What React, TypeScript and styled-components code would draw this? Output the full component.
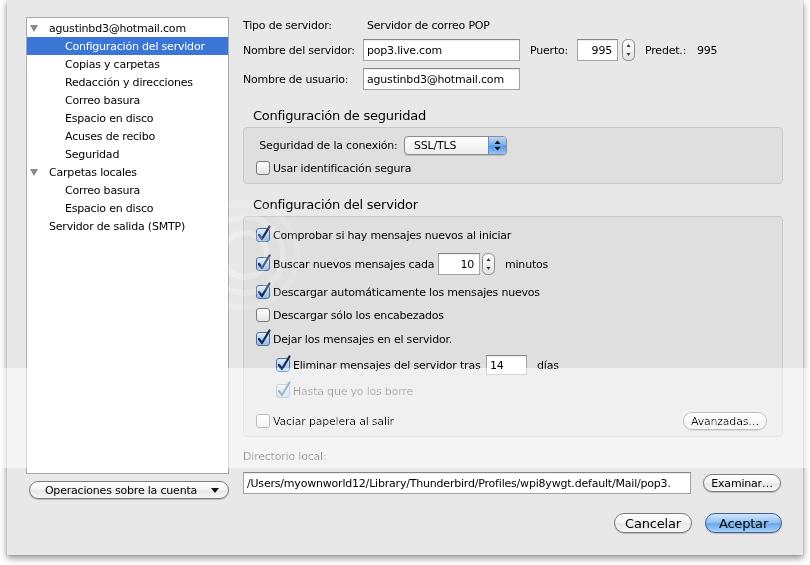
import React from "react";
import styled, { createGlobalStyle } from "styled-components";

const GlobalStyle = createGlobalStyle`
  html, body { margin: 0; padding: 0; background: #ffffff; }
  body {
    font-family: "DejaVu Sans", "Liberation Sans", sans-serif;
    font-size: 11px;
    letter-spacing: -0.2px;
    color: #000;
  }
`;

const Page = styled.div`
  position: relative;
  width: 810px;
  height: 565px;
  overflow: hidden;
  padding: 0 7px;
  box-sizing: border-box;
  background: #fff;
  isolation: isolate;
`;

const Window = styled.div`
  width: 796px;
  height: 555px;
  box-sizing: border-box;
  background: #e8e8e8;
  box-shadow: 0 3px 7px rgba(0, 0, 0, 0.45), 0 0 0 1px rgba(0, 0, 0, 0.06);
  display: flex;
  gap: 14px;
  padding: 17px 20px 0 19px;
`;

/* ---------- sidebar ---------- */
const Sidebar = styled.div`
  width: 203px;
  flex: none;
  display: flex;
  flex-direction: column;
`;

const TreeList = styled.ul`
  list-style: none;
  margin: 0;
  padding: 1px 0 0;
  height: 457px;
  box-sizing: border-box;
  background: #fff;
  border: 1px solid #a9a9a9;
`;

const TreeRow = styled.li<{ $level: number; $selected?: boolean }>`
  height: 18px;
  display: flex;
  align-items: center;
  padding-left: ${(p) => (p.$level ? 38 : 3)}px;
  background: ${(p) => (p.$selected ? "#3b76d6" : "transparent")};
  color: ${(p) => (p.$selected ? "#fff" : "#000")};
  white-space: nowrap;
`;

const Disclosure = styled.span`
  width: 19px;
  flex: none;
  display: flex;
  align-items: center;
`;

const Pill = styled.button<{ $w: number; $h?: number; $fs?: number; $primary?: boolean; $ml?: number }>`
  box-sizing: border-box;
  width: ${(p) => p.$w}px;
  height: ${(p) => p.$h ?? 20}px;
  margin-left: ${(p) => p.$ml ?? 0}px;
  flex: none;
  border-radius: 999px;
  border: 1px solid ${(p) => (p.$primary ? "#3d5f93" : "#7b7b7b")};
  background: ${(p) =>
    p.$primary
      ? "linear-gradient(#d2e6fa 0%, #97c3f2 45%, #6aa7ec 55%, #a9d3f8 100%)"
      : "linear-gradient(#ffffff 0%, #f5f5f5 45%, #e7e7e7 55%, #f7f7f7 100%)"};
  box-shadow: 0 1px 1px rgba(0, 0, 0, 0.2);
  font-family: inherit;
  font-size: ${(p) => p.$fs ?? 11}px;
  letter-spacing: -0.2px;
  color: #000;
  padding: 0;
  display: flex;
  align-items: center;
  justify-content: center;
  gap: 14px;
`;

const AccountButton = styled(Pill)`
  margin: 7px 0 0 3px;
  padding-left: 6px;
`;

/* ---------- main ---------- */
const Main = styled.div`
  width: 540px;
  flex: none;
  display: flex;
  flex-direction: column;
`;

const FieldRow = styled.div<{ $mt: number; $h: number }>`
  display: flex;
  align-items: center;
  margin-top: ${(p) => p.$mt}px;
  height: ${(p) => p.$h}px;
  white-space: nowrap;
`;

const FieldLabel = styled.span<{ $w: number; $ml?: number }>`
  width: ${(p) => p.$w}px;
  margin-left: ${(p) => p.$ml ?? 0}px;
  flex: none;
  white-space: nowrap;
`;

const Value = styled.span`
  padding-left: 4px;
`;

const TextField = styled.input<{ $w: number; $h?: number; $right?: boolean; $ml?: number }>`
  box-sizing: border-box;
  width: ${(p) => p.$w}px;
  height: ${(p) => p.$h ?? 22}px;
  margin: 0 0 0 ${(p) => p.$ml ?? 0}px;
  flex: none;
  border: 1px solid #a2a2a2;
  border-top-color: #858585;
  background: #fff;
  box-shadow: inset 0 1px 0 rgba(0, 0, 0, 0.07);
  padding: 0 ${(p) => (p.$right ? 5 : 3)}px 0 3px;
  font-family: inherit;
  font-size: 11px;
  letter-spacing: -0.2px;
  color: #000;
  text-align: ${(p) => (p.$right ? "right" : "left")};
  outline: none;
  border-radius: 0;
`;

const StepperBox = styled.span<{ $ml: number }>`
  margin-left: ${(p) => p.$ml}px;
  display: flex;
  flex: none;
`;

const SectionTitle = styled.div<{ $mt: number }>`
  margin-top: ${(p) => p.$mt}px;
  height: 16px;
  line-height: 16px;
  font-size: 13px;
  letter-spacing: -0.25px;
  padding-left: 10px;
`;

const GroupBox = styled.div<{ $pt: number; $pb: number }>`
  margin-top: 3px;
  border: 1px solid #c9c9c9;
  border-radius: 4px;
  background: #dfdfdf;
  padding: ${(p) => p.$pt}px 15px ${(p) => p.$pb}px 12px;
  display: flex;
  flex-direction: column;
`;

const CheckRow = styled.div<{ $mt: number; $indent?: boolean; $disabled?: boolean }>`
  display: flex;
  align-items: center;
  height: 22px;
  margin-top: ${(p) => p.$mt}px;
  padding-left: ${(p) => (p.$indent ? 20 : 0)}px;
  color: ${(p) => (p.$disabled ? "#666666" : "#000")};
  white-space: nowrap;
`;

const CheckText = styled.span<{ $w?: number }>`
  ${(p) => (p.$w ? `width: ${p.$w}px; flex: none;` : "")}
`;

const Suffix = styled.span<{ $ml: number }>`
  margin-left: ${(p) => p.$ml}px;
`;

const Spacer = styled.span`
  flex: 1;
`;

const CheckSvg = styled.svg<{ $disabled?: boolean }>`
  flex: none;
  margin-right: 3px;
  overflow: visible;
  opacity: ${(p) => (p.$disabled ? 0.6 : 1)};
`;

const Popup = styled.div`
  width: 103px;
  height: 19px;
  box-sizing: border-box;
  border: 1px solid #8c8c8c;
  border-radius: 4px;
  background: linear-gradient(#ffffff, #ededed);
  display: flex;
  overflow: hidden;
  box-shadow: 0 1px 1px rgba(0, 0, 0, 0.15);
  flex: none;
`;

const PopupText = styled.span`
  flex: 1;
  padding-left: 9px;
  display: flex;
  align-items: center;
`;

const PopupArrows = styled.span`
  width: 17px;
  background: linear-gradient(#bcd7f6 0%, #78adee 48%, #5496e8 52%, #94c4f5 100%);
  border-left: 1px solid #6a8cbd;
  display: flex;
  align-items: center;
  justify-content: center;
`;

const DirLabel = styled.div`
  margin-top: 12px;
  height: 16px;
  line-height: 16px;
  color: #555555;
`;

const ButtonBar = styled.div`
  margin-top: 19px;
  display: flex;
  justify-content: flex-end;
  gap: 13px;
  padding-right: 1px;
`;

/* ---------- watermark overlay (lies over the window) ---------- */
const WatermarkBand = styled.div`
  position: absolute;
  left: 0;
  right: 0;
  top: 368px;
  height: 100px;
  background: rgba(255, 255, 255, 0.55);
  mix-blend-mode: overlay;
  pointer-events: none;
`;

const WatermarkRings = styled.svg`
  position: absolute;
  left: 205px;
  top: 200px;
  pointer-events: none;
`;

/* ---------- drawings ---------- */
const Triangle = () => (
  <svg width="8" height="7" viewBox="0 0 8 7">
    <polygon points="0,0 8,0 4,7" fill="#8a8a8a" />
  </svg>
);

const Check = ({ checked, disabled }: { checked?: boolean; disabled?: boolean }) => (
  <CheckSvg width="14" height="14" viewBox="0 0 14 14" $disabled={disabled}>
    <defs>
      <linearGradient id="cbOn" x1="0" y1="0" x2="0" y2="1">
        <stop offset="0" stopColor="#e6f0fc" />
        <stop offset="0.5" stopColor="#b8d4f4" />
        <stop offset="1" stopColor="#8fbcee" />
      </linearGradient>
      <linearGradient id="cbOff" x1="0" y1="0" x2="0" y2="1">
        <stop offset="0" stopColor="#ffffff" />
        <stop offset="1" stopColor="#e4e4e4" />
      </linearGradient>
    </defs>
    <rect
      x="0.5"
      y="0.5"
      width="13"
      height="13"
      rx="2.5"
      fill={checked ? "url(#cbOn)" : "url(#cbOff)"}
      stroke={checked ? "#4e6e9e" : "#7a7a7a"}
    />
    {checked && (
      <path
        d="M3 7 L6 11 L13.5 -1.5"
        fill="none"
        stroke="#1c2d4d"
        strokeWidth="2.3"
        strokeLinecap="round"
        strokeLinejoin="round"
      />
    )}
  </CheckSvg>
);

const Stepper = ({ ml }: { ml: number }) => (
  <StepperBox $ml={ml}>
    <svg width="13" height="22" viewBox="0 0 13 22">
      <defs>
        <linearGradient id="stp" x1="0" y1="0" x2="0" y2="1">
          <stop offset="0" stopColor="#ffffff" />
          <stop offset="0.5" stopColor="#f1f1f1" />
          <stop offset="1" stopColor="#e2e2e2" />
        </linearGradient>
      </defs>
      <rect x="0.5" y="0.5" width="12" height="21" rx="5" fill="url(#stp)" stroke="#8a8a8a" />
      <polygon points="4.5,8 8.5,8 6.5,5" fill="#3a3a3a" />
      <polygon points="4.5,14 8.5,14 6.5,17" fill="#3a3a3a" />
    </svg>
  </StepperBox>
);

const PopupArrowIcon = () => (
  <svg width="7" height="11" viewBox="0 0 7 11">
    <polygon points="0.5,4 6.5,4 3.5,0.5" fill="#111" />
    <polygon points="0.5,7 6.5,7 3.5,10.5" fill="#111" />
  </svg>
);

const DownArrow = () => (
  <svg width="8" height="5" viewBox="0 0 8 5">
    <polygon points="0,0 8,0 4,5" fill="#111" />
  </svg>
);

type TreeItem = { text: string; level: number; tri?: boolean; selected?: boolean };

const tree: TreeItem[] = [
  { text: "agustinbd3@hotmail.com", level: 0, tri: true },
  { text: "Configuración del servidor", level: 1, selected: true },
  { text: "Copias y carpetas", level: 1 },
  { text: "Redacción y direcciones", level: 1 },
  { text: "Correo basura", level: 1 },
  { text: "Espacio en disco", level: 1 },
  { text: "Acuses de recibo", level: 1 },
  { text: "Seguridad", level: 1 },
  { text: "Carpetas locales", level: 0, tri: true },
  { text: "Correo basura", level: 1 },
  { text: "Espacio en disco", level: 1 },
  { text: "Servidor de salida (SMTP)", level: 0 },
];

export default function App() {
  return (
    <>
      <GlobalStyle />
      <Page>
        <Window>
          <Sidebar>
            <TreeList>
              {tree.map((t, i) => (
                <TreeRow key={i} $level={t.level} $selected={t.selected}>
                  {t.level === 0 && <Disclosure>{t.tri && <Triangle />}</Disclosure>}
                  {t.text}
                </TreeRow>
              ))}
            </TreeList>
            <AccountButton $w={200} $h={18}>
              <span>Operaciones sobre la cuenta</span>
              <DownArrow />
            </AccountButton>
          </Sidebar>

          <Main>
            <FieldRow $mt={0} $h={16}>
              <FieldLabel $w={120}>Tipo de servidor:</FieldLabel>
              <Value>Servidor de correo POP</Value>
            </FieldRow>
            <FieldRow $mt={6} $h={22}>
              <FieldLabel $w={120}>Nombre del servidor:</FieldLabel>
              <TextField $w={157} readOnly defaultValue="pop3.live.com" />
              <FieldLabel $w={47} $ml={10}>Puerto:</FieldLabel>
              <TextField $w={41} $right readOnly defaultValue="995" />
              <Stepper ml={4} />
              <FieldLabel $w={52} $ml={10}>Predet.:</FieldLabel>
              <span>995</span>
            </FieldRow>
            <FieldRow $mt={7} $h={22}>
              <FieldLabel $w={120}>Nombre de usuario:</FieldLabel>
              <TextField $w={157} readOnly defaultValue="agustinbd3@hotmail.com" />
            </FieldRow>

            <SectionTitle $mt={18}>Configuración de seguridad</SectionTitle>
            <GroupBox $pt={6} $pb={4}>
              <CheckRow $mt={0}>
                <FieldLabel $w={148}>&nbsp;Seguridad de la conexión:</FieldLabel>
                <Popup>
                  <PopupText>SSL/TLS</PopupText>
                  <PopupArrows>
                    <PopupArrowIcon />
                  </PopupArrows>
                </Popup>
              </CheckRow>
              <CheckRow $mt={1}>
                <Check />
                <CheckText>Usar identificación segura</CheckText>
              </CheckRow>
            </GroupBox>

            <SectionTitle $mt={13}>Configuración del servidor</SectionTitle>
            <GroupBox $pt={7} $pb={4}>
              <CheckRow $mt={0}>
                <Check checked />
                <CheckText>Comprobar si hay mensajes nuevos al iniciar</CheckText>
              </CheckRow>
              <CheckRow $mt={7}>
                <Check checked />
                <CheckText $w={165}>Buscar nuevos mensajes cada</CheckText>
                <TextField $w={42} $right readOnly defaultValue="10" />
                <Stepper ml={2} />
                <Suffix $ml={10}>minutos</Suffix>
              </CheckRow>
              <CheckRow $mt={6}>
                <Check checked />
                <CheckText>Descargar automáticamente los mensajes nuevos</CheckText>
              </CheckRow>
              <CheckRow $mt={1}>
                <Check />
                <CheckText>Descargar sólo los encabezados</CheckText>
              </CheckRow>
              <CheckRow $mt={2}>
                <Check checked />
                <CheckText>Dejar los mensajes en el servidor.</CheckText>
              </CheckRow>
              <CheckRow $mt={4} $indent>
                <Check checked />
                <CheckText $w={193}>Eliminar mensajes del servidor tras</CheckText>
                <TextField $w={41} $h={20} readOnly defaultValue="14" />
                <Suffix $ml={10}>días</Suffix>
              </CheckRow>
              <CheckRow $mt={4} $indent $disabled>
                <Check checked disabled />
                <CheckText>Hasta que yo los borre</CheckText>
              </CheckRow>
              <CheckRow $mt={8}>
                <Check />
                <CheckText>Vaciar papelera al salir</CheckText>
                <Spacer />
                <Pill $w={84} $h={18}>Avanzadas…</Pill>
              </CheckRow>
            </GroupBox>

            <DirLabel>Directorio local:</DirLabel>
            <FieldRow $mt={7} $h={22}>
              <TextField
                $w={448}
                readOnly
                defaultValue="/Users/myownworld12/Library/Thunderbird/Profiles/wpi8ywgt.default/Mail/pop3."
              />
              <Pill $w={78} $h={18} $ml={12}>
                Examinar…
              </Pill>
            </FieldRow>

            <ButtonBar>
              <Pill $w={78} $fs={13}>Cancelar</Pill>
              <Pill $w={77} $fs={13} $primary>
                Aceptar
              </Pill>
            </ButtonBar>
          </Main>
        </Window>

        <WatermarkRings width="110" height="110" viewBox="0 0 110 110">
          <circle cx="40" cy="55" r="22" fill="none" stroke="rgba(255,255,255,0.25)" strokeWidth="6" />
          <circle cx="40" cy="55" r="38" fill="none" stroke="rgba(255,255,255,0.2)" strokeWidth="6" />
          <circle cx="40" cy="55" r="52" fill="none" stroke="rgba(255,255,255,0.15)" strokeWidth="6" />
        </WatermarkRings>
        <WatermarkBand />
      </Page>
    </>
  );
}
